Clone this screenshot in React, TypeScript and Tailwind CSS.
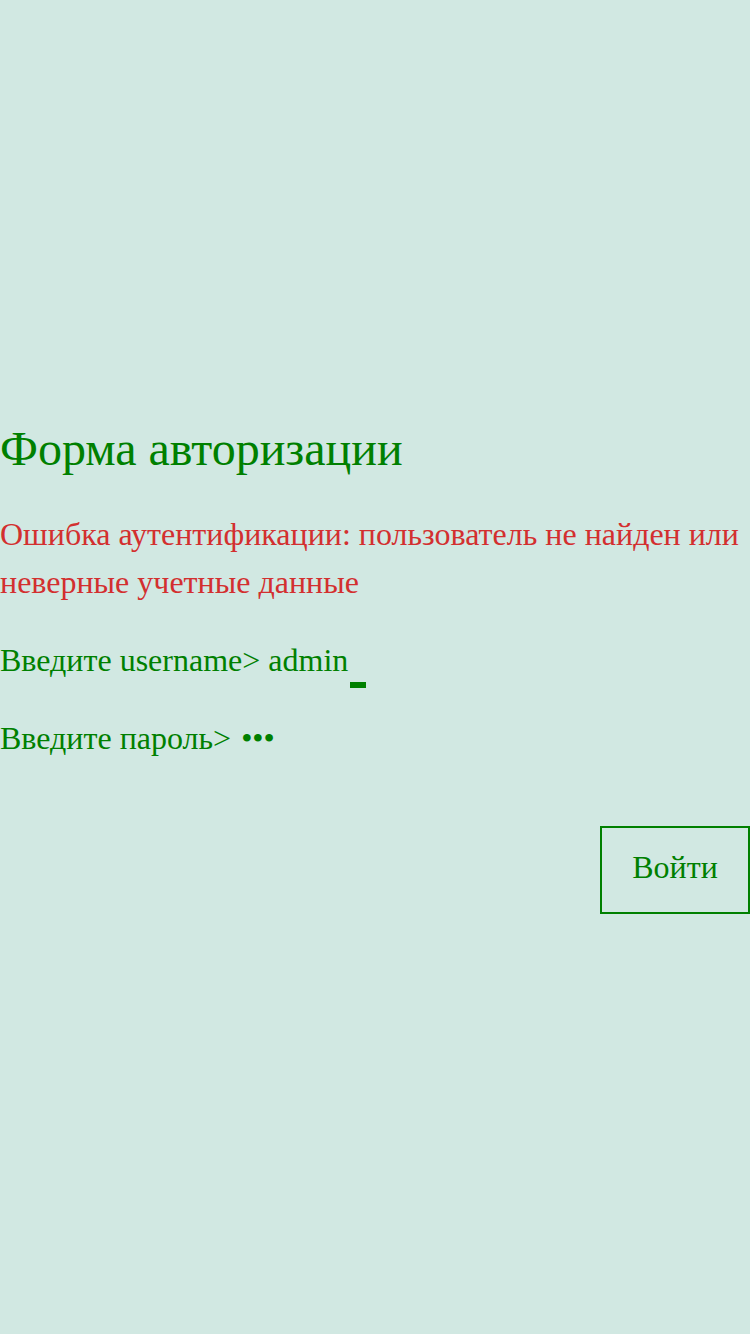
export default function App() {
  return (
    <div className="min-h-[1334px] w-[750px] bg-[#d1e8e2] text-[#008000] flex flex-col justify-center pt-[6px]" style={{ fontFamily: '"Liberation Serif", serif' }}>
      <div className="flex flex-col">
        <h1 className="text-[48px] leading-[46px] font-normal">Форма авторизации</h1>
        <p className="text-[32px] leading-[48px] text-[#d32f2f] mt-[38px]">Ошибка аутентификации: пользователь не найден или неверные учетные данные</p>
        <div className="text-[32px] leading-[40px] mt-[34px] flex items-end">
          <span>Введите username&gt; admin</span>
          <span className="w-[16px] h-[6px] bg-[#008000] mb-[-8px] ml-[2px]"></span>
        </div>
        <div className="text-[32px] leading-[40px] mt-[38px]">
          Введите пароль&gt; <span className="ml-[2px]">•••</span>
        </div>
        <div className="flex justify-end mt-[68px]">
          <button className="w-[150px] h-[88px] border-2 border-[#008000] text-[32px] leading-[40px] flex items-center justify-center pb-[6px]">Войти</button>
        </div>
      </div>
    </div>
  );
}
